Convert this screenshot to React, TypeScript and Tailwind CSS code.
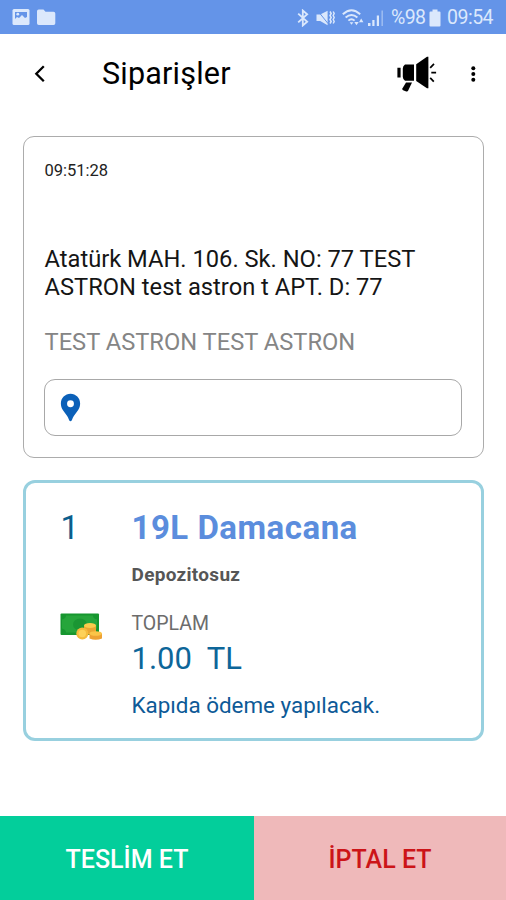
import React from 'react';
import { MdLocationPin } from 'react-icons/md';

const StatusBar = () => (
  <div className="flex h-[34px] items-center bg-[#6494e8] pl-3 pr-3 text-[#dbe8fc]">
    <svg width="44" height="18" viewBox="0 0 44 18" fill="currentColor">
      <rect x="0.5" y="1" width="17" height="16" rx="1.5" />
      <path d="M3 4h12v5l-2 1-3-3-3 3-2-1-2 2z" fill="#6494e8" />
      <circle cx="5.8" cy="6.2" r="1.4" />
      <path d="M25 3.2q0-1.7 1.7-1.7h4.8l2 2.2h8q1.8 0 1.8 1.8v9.8q0 1.7-1.7 1.7H26.8q-1.8 0-1.8-1.7z" />
    </svg>

    <div className="ml-auto flex items-center pt-px">
      <svg className="mr-[7px]" width="12" height="18" viewBox="0 0 12 18" fill="none" stroke="currentColor" strokeWidth="1.8">
        <path d="M1.200 4.600l9 8.200-4.400 3.700V1.500l4.400 3.700-9 8.200" />
      </svg>
      <svg className="mr-[7px]" width="19" height="16" viewBox="0 0 19 16" fill="currentColor">
        <path d="M0.5 4.5h3.7L11.6 0.8v14.4l-7.4-4.2H0.5z" />
        <path d="M1.5 0.5l10.5 13" stroke="#6494e8" strokeWidth="1" />
        <path d="M14 1.5l1.2 2-1.2 2 1.2 2-1.2 2 1.2 2-1.2 2M17.2 1.5l1 2-1 2 1 2-1 2 1 2-1 2" fill="none" stroke="currentColor" strokeWidth="1.5" />
      </svg>
      <svg className="mr-1" width="22" height="18" viewBox="0 0 22 18" fill="none" stroke="currentColor" strokeWidth="1.9">
        <path d="M0.8 5.2Q9.5-2.8 18.2 5.2M3.6 8.5q5.9-5.2 11.8 0M6.4 11.6q3.1-2.7 6.2 0" />
        <path d="M7.6 13.2h3.8L9.5 15.8z" fill="currentColor" stroke="none" />
        <path d="M12.3 13l2.2 3.2 2.2-3.2zM17 13.2l2.2-3.6 2.2 3.6z" fill="currentColor" stroke="none" />
      </svg>
      <svg className="mr-[7px]" width="16" height="18" viewBox="0 0 16 18" fill="currentColor">
        <path d="M0 14h2.5v3H0zM4.3 11h2.2v6H4.3zM8.8 6.5H11V17H8.8z" />
        <path d="M13.4 1.5h1.6V17h-1.6z" opacity="0.45" />
      </svg>
      <span className="w-[35px] whitespace-nowrap text-[19.5px] leading-[34px] tracking-[-0.6px]">%98</span>
      <svg className="ml-[3px] mr-[6px]" width="12" height="18" viewBox="0 0 12 18" fill="currentColor">
        <path d="M3.5 0.5h5v2h2q1 0 1 1v13q0 1-1 1h-9q-1 0-1-1v-13q0-1 1-1h2z" />
      </svg>
      <span className="w-[47px] whitespace-nowrap text-[19.5px] leading-[34px] tracking-[-0.5px]">09:54</span>
    </div>
  </div>
);

const MegaphoneIcon = () => (
  <svg width="42" height="38" viewBox="396 54 42 38" fill="black">
    <path d="M397.4 66.8h3.2v9.8h-3.2zM405 63.5H414v16.3h-9q-2.2-1.6-2.2-4v-8.3q0-2.4 2.2-4z" />
    <path d="M416.2 63.2l10.8-7.4h1.4v31.4H427l-10.8-7.2z" />
    <path d="M406 81.4h6l-3.8 8.2q-.6 1.2-1.9.8l-3.2-1.2q-1.2-.5-.7-1.6z" />
    <path d="M430.2 66.8l3.8-4M431.3 71.7h4.8M430.2 76.8l3.6 3.8" fill="none" stroke="black" strokeWidth="1.7" />
  </svg>
);

const MoneyIcon = () => (
  <svg width="44" height="28" viewBox="0 0 44 28">
    <rect x="0.5" y="0.5" width="38.5" height="21.5" rx="1" fill="#16962f" />
    <path d="M6 2.5h27q0 3 4 4v9q-4 1-4 4H6q0-3-4-4v-9q4-1 4-4z" fill="#26a53b" />
    <ellipse cx="20" cy="11.5" rx="7" ry="6" fill="#1b9633" />
    <path d="M24 12.5V20q6 3.5 12 0v-7.5z" fill="#eba632" />
    <ellipse cx="30" cy="12.5" rx="6" ry="2.5" fill="#fbcb4c" />
    <path d="M29.5 20.5v5q6 2.5 12.5 0v-5z" fill="#eea233" />
    <ellipse cx="35.7" cy="20.5" rx="6.2" ry="2.3" fill="#fbc548" />
    <circle cx="22.3" cy="20.5" r="6" fill="#f5bb3c" />
    <circle cx="22.3" cy="20.5" r="3.7" fill="#fdd159" />
  </svg>
);

const Header = () => (
  <header className="flex h-[79px] items-center pl-[34px] pr-[28px] text-black">
    <svg width="12" height="18" viewBox="0 0 12 18" fill="none" stroke="black" strokeWidth="2.3">
      <path d="M9.8 1.3L2.3 8.8l7.5 7.5" />
    </svg>
    <h1 className="ml-14 text-[30.5px] leading-[79px] tracking-[0.2px]">Siparişler</h1>
    <div className="ml-auto flex items-center">
      <MegaphoneIcon />
      <svg className="ml-8" width="8" height="18" viewBox="0 0 8 18" fill="black">
        <circle cx="3.3" cy="3.3" r="2" />
        <circle cx="3.3" cy="9" r="2" />
        <circle cx="3.3" cy="14.7" r="2" />
      </svg>
    </div>
  </header>
);

const AddressCard = () => (
  <section className="h-[322px] rounded-[11px] border border-[#acacac] px-[21px] pt-[22px]">
    <p className="text-[16.5px] leading-6 text-[#222]">09:51:28</p>
    <div className="mt-[62px] whitespace-nowrap text-[23.7px] leading-7 text-[#151515]">
      <p>Atatürk MAH. 106. Sk. NO: 77 TEST</p>
      <p>ASTRON test astron t APT. D: 77</p>
    </div>
    <p className="mt-[27px] whitespace-nowrap text-[23.7px] leading-7 text-[#858585]">TEST ASTRON TEST ASTRON</p>
    <div className="-ml-px mt-[23px] flex h-[57px] items-center rounded-[11px] border border-[#a8a8a8] pl-[9px]">
      <MdLocationPin className="h-[33px] w-[33px] text-[#0b60b8]" />
    </div>
  </section>
);

const ProductCard = () => (
  <section className="mt-[22px] flex h-[261px] rounded-[12px] border-[3px] border-[#98d0df] whitespace-nowrap">
    <div className="flex w-[106px] flex-col pl-[34px]">
      <span className="mt-[25px] pl-px text-[33px] leading-10 text-[#0c5e8c]">1</span>
      <div className="mt-[65px]">
        <MoneyIcon />
      </div>
    </div>
    <div>
      <h2 className="mt-[25px] text-[33px] font-bold leading-10 tracking-[0.5px] text-[#5b8ddd]">19L Damacana</h2>
      <p className="mt-[15px] text-[19px] font-bold leading-6 tracking-[0.3px] text-[#565656]">Depozitosuz</p>
      <p className="mt-[25px] text-[19.5px] leading-6 text-[#6c6c6c]">TOPLAM</p>
      <p className="mt-[3px] whitespace-pre text-[31px] leading-10 text-[#0d6699]">1.00  TL</p>
      <p className="mt-3 text-[22.4px] leading-7 text-[#0d5a97]">Kapıda ödeme yapılacak.</p>
    </div>
  </section>
);

const App: React.FC = () => {
  return (
    <div className="flex h-[900px] w-[506px] flex-col overflow-hidden bg-white font-[Roboto,sans-serif]">
      <StatusBar />
      <Header />
      <main className="flex-1 px-[22.5px] pt-[23px]">
        <AddressCard />
        <ProductCard />
      </main>
      <footer className="flex h-[84px] text-center text-[25px] font-medium leading-[87px]">
        <button className="w-[254px] bg-[#03ce9b] text-white">TESLİM ET</button>
        <button className="flex-1 bg-[#efb9ba] text-[#cc1418]">İPTAL ET</button>
      </footer>
    </div>
  );
};

export default App;
